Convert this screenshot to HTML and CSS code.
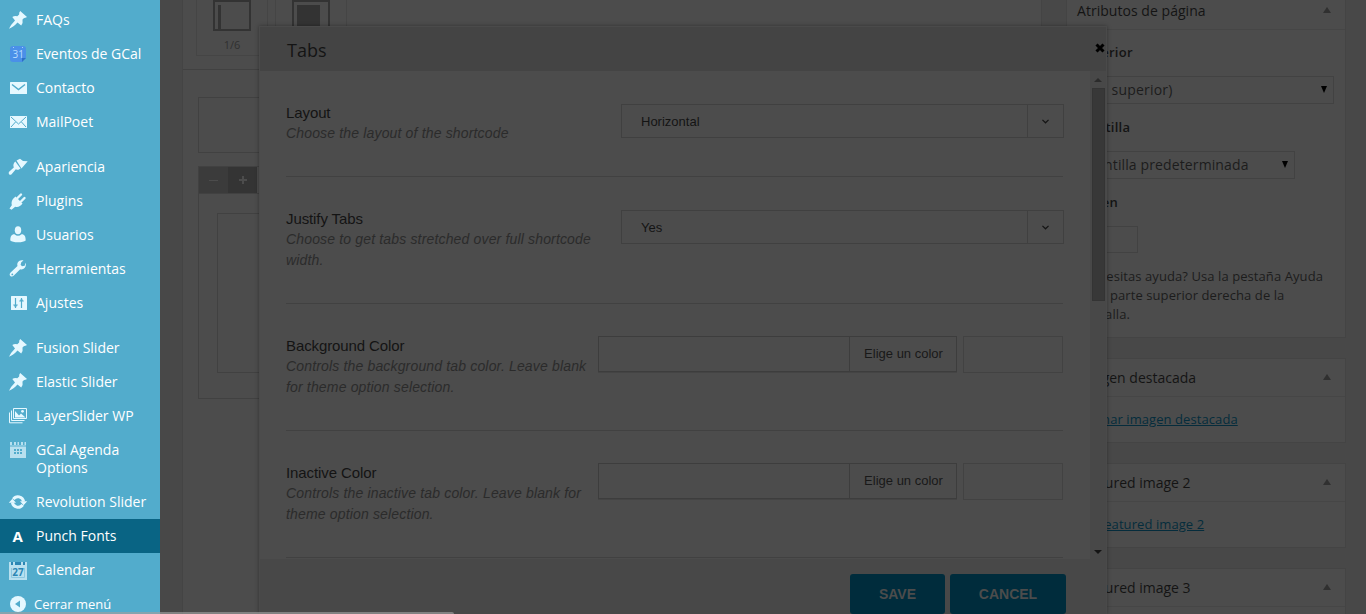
FILE: index.html
```html
<!DOCTYPE html>
<html lang="es">
<head>
  <meta charset="UTF-8">
  <title>Editar página</title>
  <link rel="stylesheet" href="styles.css">
</head>
<body>
  <svg class="defs" width="0" height="0">
    <symbol id="pin" viewBox="0 0 20 20"><path d="M12.200 1L19 7l-1.500.8q-1.500-.3-3 1.800.8 3.400-1.300 6L9.500 12.500Q5 17.500 1 18.700 2.500 15 7 10.500L4.300 7q2.200-1.600 5-.8 2.700-1.700 2-3.700z"/></symbol>
  </svg>

  <!-- menu lateral -->
  <ul class="menu">
    <li><svg viewBox="0 0 20 20"><use href="#pin"/></svg><span>FAQs</span></li>
    <li><svg viewBox="0 0 20 20"><path fill="#4a90e8" d="M5 2h10q3 0 3 3v9l-4 4H5q-3 0-3-3V5q0-3 3-3z"/><path fill="#2c6fc4" d="M14 18v-4h4z"/><path fill="#a9d0f8" d="M5 3h1v1H5zM14 3h1v1h-1z"/><text x="4.500" y="14" class="day">31</text></svg><span>Eventos de GCal</span></li>
    <li><svg viewBox="0 0 20 20"><rect x="2" y="4" width="17" height="12" rx=".5"/><path class="cut" stroke-width="1.500" d="M4 6.500l6.500 5 6.500-5"/></svg><span>Contacto</span></li>
    <li><svg viewBox="0 0 20 20"><rect x="2" y="4" width="17" height="12" rx=".5"/><path class="cut" d="M3 5l7.500 7L18 5M3 15l4.500-5M18 15l-4.500-5"/></svg><span>MailPoet</span></li>
    <li class="sep"></li>
    <li><svg viewBox="0 0 20 20"><path d="M8.500 3.500L12 1.800l3 2.200 4.700.2-6.200 7.300z"/><path d="M7.300 4.500l5.200 7-2 1.200q-1.500 0-2.700-.5l-4.200 5q-1.300 1-2.500 0-1-1.200 0-2.500l4.700-4.200Q4.500 7 7.300 4.500z"/></svg><span>Apariencia</span></li>
    <li><svg viewBox="0 0 20 20"><path d="M7.500 5.500l7 7q-3 4.300-7.300 3.200L3.500 18.700 1.500 17.500l2.300-3.300Q2.500 9.500 7.500 5.500z"/><path class="prong" d="M9.500 7L13 3.500M13 10.500L16.500 7"/></svg><span>Plugins</span></li>
    <li><svg viewBox="0 0 20 20"><ellipse cx="10" cy="5.300" rx="3.200" ry="4"/><path d="M6.500 9.300q3.500 3 7 0c3.300 0 4.200 2.500 4.200 6.200q-2 1.800-7.700 1.800t-7.700-1.800c0-3.700.9-6.200 4.200-6.200z"/></svg><span>Usuarios</span></li>
    <li><svg viewBox="0 0 20 20"><path d="M16.700 6.800L14 7.300l-1.400-1.500.7-2.600 2.200-1.600c-2.300-.8-4.500 0-5.600 1.700-.7 1.200-.8 2.500-.4 3.700l-6.900 6.400c-2.500 2.400.6 5.900 3.300 3.200l6.300-6.300c3 .8 5.700-1.300 5.700-4.800 0-.6-.2-1.100-.4-1.700z"/><circle cx="4.300" cy="15.400" r=".9" class="hole"/></svg><span>Herramientas</span></li>
    <li><svg viewBox="0 0 20 20"><rect x="3" y="3" width="16" height="14" rx=".5"/><path class="cut" stroke-width="1.200" d="M7.500 5v10M5.300 12h4.400M6.200 13h2.600M13.500 5v10M11.300 8h4.400M12.200 7h2.600"/></svg><span>Ajustes</span></li>
    <li class="sep"></li>
    <li><svg viewBox="0 0 20 20"><use href="#pin"/></svg><span>Fusion Slider</span></li>
    <li><svg viewBox="0 0 20 20"><use href="#pin"/></svg><span>Elastic Slider</span></li>
    <li><svg viewBox="0 0 20 20"><path class="frame" d="M5.500 2.500h13v10h-13zM3.500 4.500v10h13M1.500 6.500v10.300h13"/><path d="M7 11.500V5l4 4.500 2-2 4.500 4z"/><circle cx="14.500" cy="5.300" r="1.400"/></svg><span>LayerSlider WP</span></li>
    <li class="two"><svg viewBox="0 0 20 20" class="dim"><path d="M2 2h2v3h2V2h2v3h1.500V2h1.500v3H13V2h2v3h1.500V2H18v3.500H2z"/><path fill-rule="evenodd" d="M2 6.500h16V18H2zM6 9v2h2V9zm3 0v2h2V9zm3 0v2h2V9zM6 12v2h2v-2zm3 0v2h2v-2zm3 0v2h2v-2z"/></svg><span>GCal Agenda<br>Options</span></li>
    <li><svg viewBox="0 0 20 20"><path class="cycle" d="M5.300 7.200a5.700 5.700 0 0 1 10.300 2.300M14.700 12.800a5.700 5.700 0 0 1-10.300-2.300"/><path d="M12 9.300h7.200l-3.600 4zM.8 10.700H8l-3.600-4z"/></svg><span>Revolution Slider</span></li>
    <li class="current"><svg viewBox="0 0 20 20"><text x="4.600" y="15.600" class="letter">A</text></svg><span>Punch Fonts</span></li>
    <li><svg viewBox="0 0 20 20" class="dim"><path fill="#2b86b4" d="M1 2h18v5H1z"/><path d="M1 2h2v3h2V2h2v3h6V2h2v3h2V2h2v18H1z"/><path fill="#2b86b4" d="M4 2h1v3H4zM8 2h4v2H8zM15 2h1v3h-1z"/><path class="frame-dark" d="M3.500 8v9.500h13V8"/><text x="4.200" y="16" class="date">27</text></svg><span>Calendar</span></li>
    <li class="collapse"><svg viewBox="0 0 20 20"><circle cx="10" cy="10" r="8"/><path class="hole" d="M12 6.500v7L7 10z"/></svg><span>Cerrar menú</span></li>
  </ul>

  <div class="page">
    <!-- constructor de la pagina -->
    <div class="builder">
      <div class="elements">
        <div class="element"><i class="thumb"><b class="bar"></b></i><span>1/6</span></div>
        <div class="element"><i class="thumb"><b class="full"></b></i></div>
      </div>
      <div class="canvas">
        <div class="row-box"></div>
        <div class="tools"><span class="minus"></span><span class="plus"></span></div>
        <div class="column-box"><div class="inner-box"></div></div>
      </div>
    </div>

    <div class="side">
      <div class="box attributes">
        <h3>Atributos de página<i class="toggle"></i></h3>
        <div class="inside">
          <strong>Superior</strong>
          <div class="select parent">(sin superior)<i></i></div>
          <strong>Plantilla</strong>
          <div class="select template">Plantilla predeterminada<i></i></div>
          <strong>Orden</strong>
          <div class="order"></div>
          <p>¿Necesitas ayuda? Usa la pestaña Ayuda en la parte superior derecha de la pantalla.</p>
        </div>
      </div>
      <div class="box">
        <h3>Imagen destacada<i class="toggle"></i></h3>
        <div class="inside"><a>Asignar imagen destacada</a></div>
      </div>
      <div class="box">
        <h3>Featured image 2<i class="toggle"></i></h3>
        <div class="inside"><a>Set featured image 2</a></div>
      </div>
      <div class="box last">
        <h3>Featured image 3<i class="toggle"></i></h3>
      </div>
    </div>
  </div>

  <!-- ventana del shortcode -->
  <div class="modal">
    <div class="modal-head">
      <h2>Tabs</h2>
      <svg class="close" viewBox="0 0 10 10"><path d="M1.500 1.500l7 7M8.500 1.500l-7 7"/></svg>
    </div>
    <div class="modal-body">
      <div class="fields">
        <div class="field">
          <div class="desc"><h4>Layout</h4><p>Choose the layout of the shortcode</p></div>
          <div class="dropdown"><span>Horizontal</span><svg viewBox="0 0 10 8"><path d="M1.500 2.200L5 5.500l3.500-3.300"/></svg></div>
        </div>
        <div class="field">
          <div class="desc"><h4>Justify Tabs</h4><p>Choose to get tabs stretched over full shortcode width.</p></div>
          <div class="dropdown"><span>Yes</span><svg viewBox="0 0 10 8"><path d="M1.500 2.200L5 5.500l3.500-3.300"/></svg></div>
        </div>
        <div class="field">
          <div class="desc"><h4>Background Color</h4><p>Controls the background tab color. Leave blank for theme option selection.</p></div>
          <div class="color"><div class="picker"><span>Elige un color</span></div><div class="value"></div></div>
        </div>
        <div class="field">
          <div class="desc"><h4>Inactive Color</h4><p>Controls the inactive tab color. Leave blank for theme option selection.</p></div>
          <div class="color"><div class="picker"><span>Elige un color</span></div><div class="value"></div></div>
        </div>
      </div>
      <div class="scrollbar"><i class="up"></i><b></b><i class="down"></i></div>
    </div>
    <div class="modal-foot">
      <div class="btn save">SAVE</div>
      <div class="btn cancel">CANCEL</div>
    </div>
  </div>

  <div class="status"></div>
</body>
</html>
```

FILE: styles.css
```css
* {
  box-sizing: border-box;
}

body {
  margin: 0;
  height: 614px;
  overflow: hidden;
  display: flex;
  position: relative;
  background: #484848;
  color: #141414;
  font-family: "Open Sans", sans-serif;
  font-size: 13px;
}

h2, h3, h4, p, ul {
  margin: 0;
  padding: 0;
  font-weight: normal;
}

.defs {
  position: absolute;
}

/* menu */
.menu {
  width: 160px;
  height: 614px;
  flex: none;
  padding-top: 3px;
  list-style: none;
  overflow: hidden;
  background: #52accc;
  color: #fff;
  font-size: 14px;
  line-height: 18px;
}

.menu li {
  height: 34px;
  padding: 8px 0 8px 8px;
  display: flex;
}

.menu li.sep {
  height: 11px;
  padding: 0;
}

.menu li.two {
  height: 52px;
}

.menu li.current {
  background: #096484;
}

.menu li.collapse {
  height: 27px;
  padding-bottom: 0;
  font-size: 13px;
}

.menu svg {
  width: 20px;
  height: 20px;
  margin: -1px 8px 0 0;
  flex: none;
  fill: #e5f8ff;
}

.menu li.collapse svg {
  margin-right: 6px;
}

.menu .dim {
  fill: #b8e0ef;
}

.menu .cut {
  fill: none;
  stroke: #52accc;
}

.menu .hole {
  fill: #52accc;
}

.menu .prong {
  stroke: #e5f8ff;
  stroke-width: 2.4;
  stroke-linecap: round;
}

.menu .frame {
  fill: none;
  stroke: #e5f8ff;
  stroke-width: 1;
}

.menu .frame-dark {
  fill: none;
  stroke: #8cc8e0;
}

.menu .cycle {
  fill: none;
  stroke: #e5f8ff;
  stroke-width: 3;
}

.menu .day {
  fill: #b9dcff;
  font-size: 10px;
}

.menu .letter {
  fill: #fff;
  font-size: 15px;
  font-weight: bold;
}

.menu .date {
  fill: #2b86b4;
  font-size: 10px;
  font-weight: bold;
}

/* page behind the window */
.page {
  flex: 1;
  height: 614px;
  overflow: hidden;
  display: flex;
  padding-left: 22px;
}

.builder {
  width: 860px;
  height: 614px;
  border: solid #444;
  border-width: 0 1px;
  background: #4c4c4c;
}

.elements {
  height: 70px;
  padding-left: 13px;
  display: flex;
  gap: 7px;
  border-bottom: 1px solid #414141;
}

.element {
  width: 72px;
  height: 56px;
  border: 1px solid #454545;
  border-top: 0;
  text-align: center;
  color: #303030;
  font-size: 11px;
}

.thumb {
  display: block;
  width: 38px;
  height: 31px;
  margin: 0 auto 6px;
  padding: 3px;
  border: 2px solid #333;
}

.thumb b {
  display: block;
  height: 24px;
  background: #333;
}

.thumb .bar {
  width: 3px;
}

.thumb .full {
  width: 23px;
  margin-left: 0;
}

.canvas {
  padding: 27px 15px;
}

.row-box {
  height: 56px;
  border: 1px solid #414141;
}

.tools {
  height: 28px;
  margin-top: 13px;
  display: flex;
  border: 1px solid #414141;
}

.tools span {
  width: 29px;
  height: 26px;
  display: flex;
  align-items: center;
  justify-content: center;
  background: #3b3b3b;
}

.tools .plus {
  background: #343434;
}

.tools span::before {
  content: "";
  width: 9px;
  height: 1px;
  background: #4c4c4c;
}

.tools .plus::before {
  width: 8px;
  height: 8px;
  background: linear-gradient(#4c4c4c, #4c4c4c) center / 2px 8px no-repeat, linear-gradient(#4c4c4c, #4c4c4c) center / 8px 2px no-repeat;
}

.column-box {
  height: 205px;
  padding: 19px 18px;
  border: 1px solid #414141;
  border-top: 0;
}

.inner-box {
  height: 160px;
  border: 1px solid #414141;
}

/* side boxes */
.side {
  width: 280px;
  margin: -9px 0 0 24px;
}

.box {
  height: 85px;
  margin-bottom: 20px;
  border: 1px solid #444;
  background: #4c4c4c;
}

.box.attributes {
  height: 347px;
}

.box.last {
  height: 46px;
  margin: 0;
  border-bottom: 0;
}

.box h3 {
  height: 38px;
  padding: 0 14px 0 10px;
  display: flex;
  align-items: center;
  justify-content: space-between;
  border-bottom: 1px solid #464646;
  font-size: 14px;
  line-height: 20px;
}

.attributes h3 {
  letter-spacing: .04px;
}

.toggle {
  margin-top: -2px;
  border: solid transparent;
  border-width: 0 4px 6px;
  border-bottom-color: #303030;
}

.inside {
  padding: 13px 11px 0 10px;
  line-height: 19px;
  letter-spacing: .08px;
}

.box a {
  color: #052c3c;
  text-decoration: underline;
}

.inside strong {
  display: block;
  height: 19px;
  font-weight: 600;
  letter-spacing: .25px;
}

.select {
  width: 257px;
  height: 28px;
  margin: 14px 0;
  padding: 0 6px 1px 6px;
  display: flex;
  align-items: center;
  justify-content: space-between;
  border: 1px solid #424242;
  color: #1c1c1c;
  font-size: 14px;
  letter-spacing: .2px;
}

.select.template {
  width: 218px;
  letter-spacing: .12px;
}

.select i {
  border: solid transparent;
  border-width: 7px 3.5px 0;
  border-top-color: #000;
}

.order {
  width: 61px;
  height: 27px;
  margin: 14px 0;
  border: 1px solid #424242;
}

.inside p {
  color: #1c1c1c;
}

/* shortcode window, over the page */
.modal {
  position: absolute;
  left: 259px;
  top: 26px;
  width: 848px;
  height: 588px;
  border: 1px solid #4a4a4a;
  border-bottom: 0;
  background: #484848;
  box-shadow: 0 0 4px rgba(0, 0, 0, .35);
  font-family: "Liberation Sans", Arial, sans-serif;
}

.modal-head {
  height: 44px;
  padding: 0 1px 0 27px;
  display: flex;
  align-items: center;
  justify-content: space-between;
  background: #444;
}

.modal-head h2 {
  padding-top: 2px;
  font-family: "Open Sans", sans-serif;
  font-size: 18px;
}

.close {
  width: 10px;
  height: 10px;
  margin-top: -3px;
  stroke: #000;
  stroke-width: 3;
}

.modal-body {
  height: 488px;
  display: flex;
  overflow: hidden;
}

.fields {
  flex: 1;
  padding: 0 27px 0 26px;
  background: #4c4c4c;
}

.field {
  padding: 32px 0;
  display: flex;
  justify-content: space-between;
  border-bottom: 1px solid #414141;
}

.desc {
  width: 310px;
}

.desc h4 {
  font-size: 15px;
  line-height: 20px;
  letter-spacing: -.1px;
}

.desc p {
  color: #2b2b2b;
  font-size: 14px;
  font-style: italic;
  line-height: 21px;
  letter-spacing: .16px;
}

.dropdown {
  width: 443px;
  height: 34px;
  margin: 1px -1px 0 0;
  display: flex;
  border: 1px solid #404040;
  font-size: 13px;
}

.dropdown span {
  flex: 1;
  padding-left: 19px;
  border-right: 1px solid #404040;
  line-height: 33px;
}

.dropdown svg {
  width: 9px;
  height: 7px;
  margin: 13px 13px 0;
  fill: none;
  stroke: #141414;
  stroke-width: 1.4;
}

.color {
  display: flex;
  gap: 6px;
}

.picker {
  width: 359px;
  height: 36px;
  padding-left: 250px;
  border: 1px solid #3d3d3d;
  box-shadow: 0 1px 0 #444;
}

.picker span {
  display: block;
  height: 34px;
  border-left: 1px solid #3d3d3d;
  padding-left: 1px;
  color: #191919;
  font-size: 13px;
  line-height: 33px;
  text-align: center;
}

.value {
  width: 100px;
  height: 37px;
  border: 1px solid #424242;
}

.scrollbar {
  width: 16px;
  padding-right: 1px;
  display: flex;
  flex-direction: column;
  align-items: center;
  background: #484848;
}

.scrollbar b {
  width: 13px;
  height: 213px;
  margin: 6px 0 auto 1px;
  background: #383838;
  border: 1px solid #343434;
}

.scrollbar .up {
  margin-top: 7px;
  border: solid transparent;
  border-width: 0 4px 4px;
  border-bottom-color: #2b2b2b;
}

.scrollbar .down {
  margin-bottom: 5px;
  border: solid transparent;
  border-width: 4px 4px 0;
  border-top-color: #141414;
}

.modal-foot {
  padding: 15px 40px 0 0;
  display: flex;
  justify-content: flex-end;
  gap: 5px;
}

.btn {
  height: 40px;
  border-radius: 3px;
  background: #002c3c;
  color: #4c4c4c;
  font-size: 14px;
  font-weight: bold;
  line-height: 40px;
  text-align: center;
}

.btn.save {
  width: 95px;
}

.btn.cancel {
  width: 116px;
}

/* browser status strip along the bottom edge */
.status {
  position: absolute;
  left: 0;
  bottom: 0;
  width: 454px;
  height: 2px;
  border-top-right-radius: 2px;
  background: rgba(160, 160, 160, .65);
}
```
